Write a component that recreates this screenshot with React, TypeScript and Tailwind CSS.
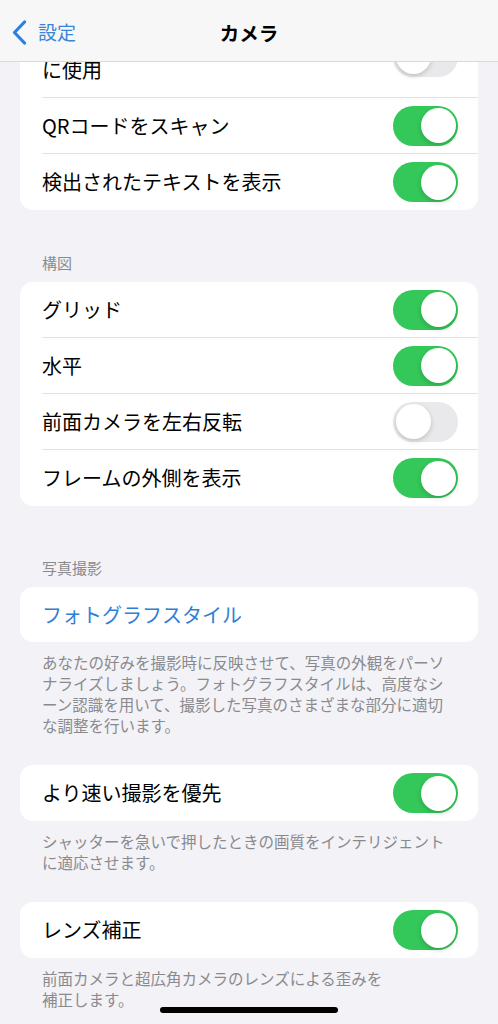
import React from 'react';

const font = { fontFamily: '"Noto Sans CJK JP", "Noto Sans", sans-serif' };

const Toggle = ({ on }: { on: boolean }) => (
  <div
    className={`relative h-[40px] w-[65px] shrink-0 rounded-full ${on ? 'bg-[#34c759]' : 'bg-[#e9e9eb]'}`}
  >
    <div
      className={`absolute top-[2.5px] h-[35px] w-[35px] rounded-full bg-white shadow-[0_2px_5px_rgba(0,0,0,0.18)] ${
        on ? 'right-[2.5px]' : 'left-[2.5px]'
      }`}
    />
  </div>
);

interface RowProps {
  label: React.ReactNode;
  on: boolean;
  last?: boolean;
  tall?: boolean;
}

const Row = ({ label, on, last = false, tall = false }: RowProps) => (
  <div className={`flex items-center pl-[22px] ${tall ? 'h-[82px]' : 'h-[56px]'}`}>
    <div
      className={`flex h-full flex-1 items-center justify-between pr-[20px] ${
        last ? '' : 'border-b border-[#e2e2e4]'
      }`}
    >
      <div className="text-[20px] leading-[26px] text-black">{label}</div>
      <Toggle on={on} />
    </div>
  </div>
);

const Header = ({ children, top }: { children: React.ReactNode; top: string }) => (
  <div className={`${top} mb-[9px] px-[42px] text-[15px] leading-[20px] text-[#8a8a8e]`}>{children}</div>
);

const Footer = ({ lines }: { lines: string[] }) => (
  <div className="mt-[10px] px-[42px] text-[15.5px] leading-[21px] whitespace-nowrap text-[#8a8a8e]">
    {lines.map((l) => (
      <div key={l}>{l}</div>
    ))}
  </div>
);

const Card = ({ children, top = '' }: { children: React.ReactNode; top?: string }) => (
  <div className={`mx-[20px] overflow-hidden rounded-[13px] bg-white ${top}`}>{children}</div>
);

export default function App() {
  return (
    <div className="relative h-[1024px] w-full overflow-hidden bg-[#f2f2f7]" style={font}>
      {/* nav bar sits over the scrolled list */}
      <div className="absolute inset-x-0 top-0 z-10 flex h-[62px] items-center border-b border-[#d9d9db] bg-[#f7f7f7] pt-[4px]">
        <div className="flex items-center pl-[12px]">
          <svg width="15" height="25" viewBox="0 0 15 25" fill="none">
            <path d="M12.5 2 L2.5 12.5 L12.5 23" stroke="#2f7fdc" strokeWidth="3.2" strokeLinecap="round" strokeLinejoin="round" />
          </svg>
          <span className="ml-[11px] text-[19px] text-[#3a85d8]">設定</span>
        </div>
        <div className="absolute inset-x-0 text-center text-[19.5px] font-bold text-black">カメラ</div>
      </div>

      <div className="pt-[16px]">
        <Card>
          <Row
            tall
            on={false}
            label={
              <>
                音量を上げるボタンをバースト
                <br />
                に使用
              </>
            }
          />
          <Row label="QRコードをスキャン" on />
          <Row label="検出されたテキストを表示" on last />
        </Card>

        <Header top="mt-[43px]">構図</Header>
        <Card>
          <Row label="グリッド" on />
          <Row label="水平" on />
          <Row label="前面カメラを左右反転" on={false} />
          <Row label="フレームの外側を表示" on last />
        </Card>

        <Header top="mt-[52px]">写真撮影</Header>
        <Card>
          <div className="flex h-[55px] items-center px-[22px] text-[20px] text-[#2f7fd6]">フォトグラフスタイル</div>
        </Card>
        <Footer
          lines={[
            'あなたの好みを撮影時に反映させて、写真の外観をパーソ',
            'ナライズしましょう。フォトグラフスタイルは、高度なシ',
            'ーン認識を用いて、撮影した写真のさまざまな部分に適切',
            'な調整を行います。',
          ]}
        />

        <Card top="mt-[29px]">
          <Row label="より速い撮影を優先" on last />
        </Card>
        <Footer lines={['シャッターを急いで押したときの画質をインテリジェント', 'に適応させます。']} />

        <Card top="mt-[29px]">
          <Row label="レンズ補正" on last />
        </Card>
        <Footer lines={['前面カメラと超広角カメラのレンズによる歪みを', '補正します。']} />
      </div>

      <div className="absolute bottom-[11px] left-[160px] h-[6px] w-[178px] rounded-full bg-black" />
    </div>
  );
}
